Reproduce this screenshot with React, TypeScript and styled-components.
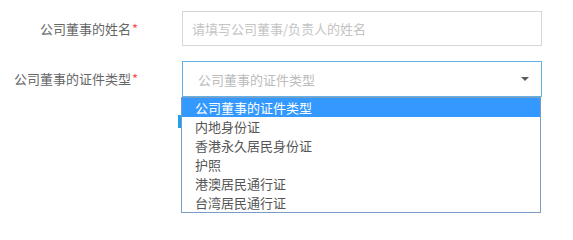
import styled, { createGlobalStyle } from 'styled-components';

const GlobalStyle = createGlobalStyle`
  html, body {
    margin: 0;
    padding: 0;
    background: #ffffff;
  }
  body {
    font-family: "Noto Sans CJK SC", "Liberation Sans", sans-serif;
    font-size: 13px;
  }
  #root {
    min-height: 222px;
  }
`;

const Page = styled.div`
  position: relative;
  min-height: 222px;
  overflow: visible;
`;

const Form = styled.form`
  display: flex;
  flex-direction: column;
  gap: 15px;
  padding-top: 11px;
`;

const Row = styled.div`
  display: grid;
  grid-template-columns: 138px 360px;
  column-gap: 44px;
  align-items: center;
`;

const Label = styled.label`
  text-align: right;
  color: #666666;
  font-size: 13px;
  line-height: 18px;
  white-space: nowrap;
`;

const Required = styled.span`
  color: #ff4d4f;
  margin-left: 1px;
`;

const TextInput = styled.input`
  box-sizing: border-box;
  width: 360px;
  height: 35px;
  padding: 0 9px;
  border: 1px solid #d6d6d6;
  border-radius: 0;
  outline: none;
  font-family: inherit;
  font-size: 13px;
  color: #555555;
  &::placeholder {
    color: #c4c4c4;
  }
`;

const SelectWrap = styled.div`
  position: relative;
  width: 360px;
`;

const SelectBox = styled.div`
  box-sizing: border-box;
  height: 36px;
  padding: 0 12px 0 15px;
  border: 1px solid #66b1e3;
  display: flex;
  align-items: center;
  justify-content: space-between;
  color: #bcbcbc;
  font-size: 13px;
`;

const Caret = styled.span`
  width: 0;
  height: 0;
  border-left: 4px solid transparent;
  border-right: 4px solid transparent;
  border-top: 4px solid #5c5c5c;
`;

const OptionList = styled.div`
  position: absolute;
  top: 36px;
  left: -1px;
  box-sizing: border-box;
  width: 360px;
  border: 1px solid #7a9bc2;
  background: #ffffff;
  z-index: 2;
`;

const Option = styled.div<{ $active?: boolean }>`
  height: 19px;
  line-height: 19px;
  padding-left: 13px;
  font-size: 13px;
  color: ${(p) => (p.$active ? '#ffffff' : '#555555')};
  background: ${(p) => (p.$active ? '#3399ff' : 'transparent')};
  white-space: nowrap;
`;

const SideTab = styled.span`
  position: absolute;
  top: 54px;
  left: -4px;
  width: 3px;
  height: 13px;
  background: #1e9ff0;
  z-index: 1;
`;

const options = ['公司董事的证件类型', '内地身份证', '香港永久居民身份证', '护照', '港澳居民通行证', '台湾居民通行证'];

export default function App() {
  return (
    <Page>
      <GlobalStyle />
      <Form>
        <Row>
          <Label>
            公司董事的姓名<Required>*</Required>
          </Label>
          <TextInput placeholder="请填写公司董事/负责人的姓名" />
        </Row>
        <Row>
          <Label>
            公司董事的证件类型<Required>*</Required>
          </Label>
          <SelectWrap>
            <SelectBox>
              <span>公司董事的证件类型</span>
              <Caret />
            </SelectBox>
            <SideTab />
            <OptionList>
              {options.map((o, i) => (
                <Option key={o} $active={i === 0}>
                  {o}
                </Option>
              ))}
            </OptionList>
          </SelectWrap>
        </Row>
      </Form>
    </Page>
  );
}
